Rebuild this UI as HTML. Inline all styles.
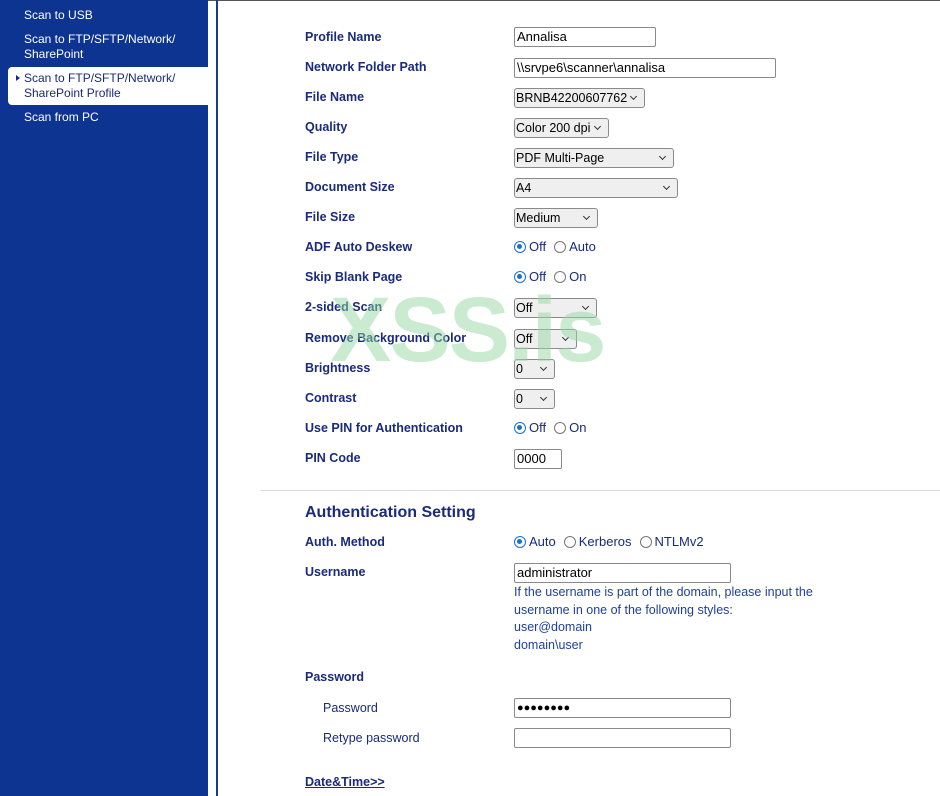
<!DOCTYPE html>
<html><head><meta charset="utf-8"><style>
*{margin:0;padding:0;box-sizing:border-box}
body{width:940px;height:796px;overflow:hidden;background:#fff;font-family:"Liberation Sans",Arial,sans-serif;position:relative}
#side{position:absolute;left:0;top:0;width:208px;height:796px;background:#0c3490}
#top{position:absolute;left:208px;top:0;width:732px;height:1px;background:#555}
.si{position:absolute;left:24px;color:#fff;font-size:12px;line-height:15px}
#act{position:absolute;left:8px;top:67px;width:200px;height:38px;background:#fff;border-radius:4px 0 0 4px}
#vl{position:absolute;left:216px;top:0;width:2px;height:796px;background:#1c3b8c}
.l{position:absolute;left:305px;font-size:12.5px;font-weight:bold;color:#1a2a7c}
.t{position:absolute;left:323px;font-size:12.5px;color:#1a2a7c}
.in{position:absolute;left:514px;height:20px;border:1px solid #8a8a8a;border-radius:2px;background:#fff;font-size:13px;line-height:18px;padding-left:2px;color:#000}
.sel{position:absolute;left:514px;height:20px;border:1px solid #8a8a8a;border-radius:3px;background:#efefef;font-size:12.5px;line-height:18px;padding-left:1px;color:#000;overflow:hidden;white-space:nowrap}
.sel:after{content:"";position:absolute;right:8px;top:5px;width:4px;height:4px;border-right:1.3px solid #333;border-bottom:1.3px solid #333;transform:rotate(45deg)}
.r{position:absolute;left:514px;font-size:13px;color:#1a2a7c;display:flex;align-items:center}
.rb{width:12px;height:12px;border-radius:50%;border:1px solid #777;margin-right:3px;display:inline-block;position:relative}
.rb.on{border:1.5px solid #1a6fd0}
.rb.on:after{content:"";position:absolute;left:2px;top:2px;width:5px;height:5px;border-radius:50%;background:#1a6fd0}
.gap{margin-left:8px}
.hint{position:absolute;left:514px;top:584px;font-size:12.5px;color:#1f3fa0;line-height:17.5px}
#wm{position:absolute;left:330px;top:278px;font-size:92px;font-weight:bold;color:rgba(150,215,160,0.5);letter-spacing:-2px}
</style></head><body>
<div id="side"></div><div id="top"></div>
<div id="act"></div>
<div class="si" style="top:8px">Scan to USB</div>
<div class="si" style="top:32px">Scan to FTP/SFTP/Network/<br>SharePoint</div>
<div class="si" style="top:71px;color:#1a2a7c">Scan to FTP/SFTP/Network/<br>SharePoint Profile</div>
<div style="position:absolute;left:16px;top:75px;width:0;height:0;border-left:4px solid #1a2a7c;border-top:3px solid transparent;border-bottom:3px solid transparent"></div>
<div class="si" style="top:110px">Scan from PC</div>
<div id="vl"></div>

<div class="l" style="top:30px">Profile Name</div><div class="in" style="top:27px;width:142px">Annalisa</div>
<div class="l" style="top:60px">Network Folder Path</div><div class="in" style="top:58px;width:262px">\\srvpe6\scanner\annalisa</div>
<div class="l" style="top:90px">File Name</div><div class="sel" style="top:88px;width:131px">BRNB42200607762</div>
<div class="l" style="top:120px">Quality</div><div class="sel" style="top:118px;width:95px">Color 200 dpi</div>
<div class="l" style="top:150px">File Type</div><div class="sel" style="top:148px;width:160px">PDF Multi-Page</div>
<div class="l" style="top:180px">Document Size</div><div class="sel" style="top:178px;width:164px">A4</div>
<div class="l" style="top:210px">File Size</div><div class="sel" style="top:208px;width:84px">Medium</div>
<div class="l" style="top:240px">ADF Auto Deskew</div><div class="r" style="top:239px"><span class="rb on"></span>Off<span class="rb gap"></span>Auto</div>
<div class="l" style="top:270px">Skip Blank Page</div><div class="r" style="top:269px"><span class="rb on"></span>Off<span class="rb gap"></span>On</div>
<div class="l" style="top:300px">2-sided Scan</div><div class="sel" style="top:298px;width:83px">Off</div>
<div class="l" style="top:331px">Remove Background Color</div><div class="sel" style="top:329px;width:63px">Off</div>
<div class="l" style="top:361px">Brightness</div><div class="sel" style="top:359px;width:41px">0</div>
<div class="l" style="top:391px">Contrast</div><div class="sel" style="top:389px;width:41px">0</div>
<div class="l" style="top:421px">Use PIN for Authentication</div><div class="r" style="top:420px"><span class="rb on"></span>Off<span class="rb gap"></span>On</div>
<div class="l" style="top:451px">PIN Code</div><div class="in" style="top:449px;width:48px">0000</div>

<div style="position:absolute;left:260px;top:490px;width:680px;height:1px;background:#ddd"></div>
<div class="l" style="top:504px;font-size:16px">Authentication Setting</div>
<div class="l" style="top:535px">Auth. Method</div><div class="r" style="top:534px"><span class="rb on"></span>Auto<span class="rb gap"></span>Kerberos<span class="rb gap"></span>NTLMv2</div>
<div class="l" style="top:565px">Username</div><div class="in" style="top:563px;width:217px">administrator</div>
<div class="hint">If the username is part of the domain, please input the<br>username in one of the following styles:<br>user@domain<br>domain\user</div>
<div class="l" style="top:670px">Password</div>
<div class="t" style="top:701px">Password</div><div class="in" style="top:698px;width:217px;font-size:11px">●●●●●●●●</div>
<div class="t" style="top:731px">Retype password</div><div class="in" style="top:728px;width:217px"></div>
<div class="l" style="top:775px;text-decoration:underline">Date&amp;Time&gt;&gt;</div>
<div id="wm">XSS.is</div>
</body></html>
